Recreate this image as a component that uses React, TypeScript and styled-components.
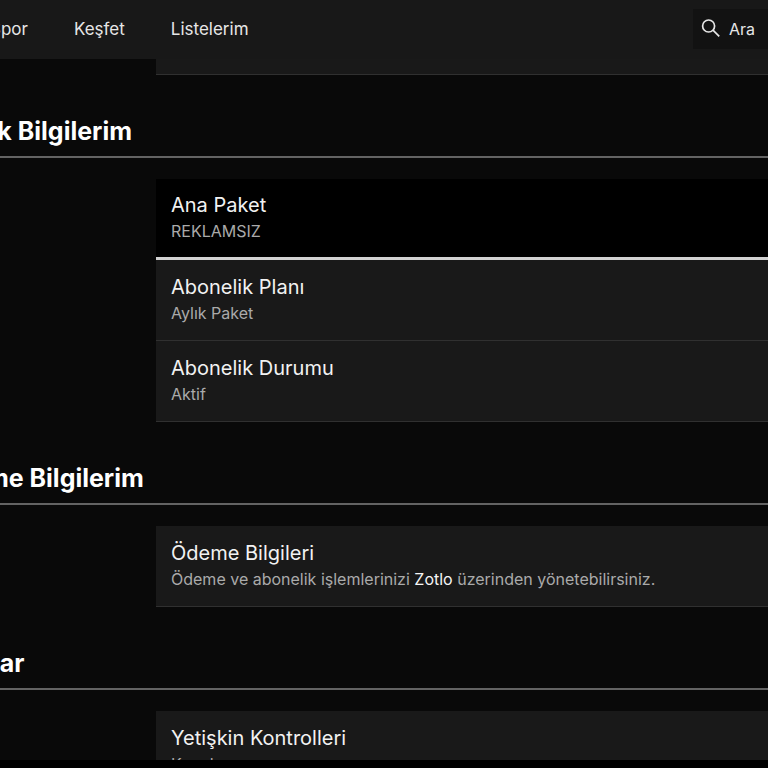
import React from 'react';
import styled, { createGlobalStyle, css } from 'styled-components';

const GlobalStyle = createGlobalStyle`
  * { box-sizing: border-box; }
  body {
    margin: 0;
    background: #000;
    color: #f2f2f2;
    font-family: Inter, "Liberation Sans", sans-serif;
    overflow: hidden;
  }
`;

const Page = styled.div`
  display: flex;
  flex-direction: column;
  height: 100vh;
  padding-bottom: 8px;
  overflow: hidden;
`;

const Header = styled.header`
  display: flex;
  flex: none;
  align-items: center;
  justify-content: space-between;
  height: 59px;
  padding-bottom: 2px;
  background: #181818;
`;

const Nav = styled.nav`
  display: flex;
  gap: 46px;
  margin-left: -10px;
`;

const NavLink = styled.a`
  color: #e6e6e6;
  font-size: 17px;
  line-height: 24px;
  text-decoration: none;
`;

const SearchButton = styled.button`
  display: flex;
  align-items: center;
  gap: 8px;
  height: 40px;
  padding: 0 13px 0 8px;
  border: 0;
  background: #121212;
  color: #e6e6e6;
  font: inherit;
  font-size: 16px;
`;

const Content = styled.main`
  flex: 1;
  min-height: 0;
  margin-left: -64px;
  background: #090909;
  overflow: hidden;
`;

const Panel = styled.div`
  margin-left: 220px;
`;

const PanelEnd = styled.div`
  height: 16px;
  border-bottom: 1px solid #303030;
  background: #191919;
`;

const Section = styled.section`
  padding-top: 40px;
`;

const SectionTitle = styled.h2`
  margin: 0 0 21px;
  padding-bottom: 9px;
  border-bottom: 2px solid #636363;
  color: #fff;
  font-size: 25px;
  font-weight: 700;
  line-height: 32px;
`;

const Row = styled.div<{ $active?: boolean }>`
  padding: 13px 15px 14px;
  border-bottom: 1px solid #303030;
  background: #191919;
  ${(p) =>
    p.$active &&
    css`
      padding-top: 12px;
      padding-bottom: 13px;
      border-bottom: 3px solid #d2d2d2;
      background: #000;
    `}
`;

const RowTitle = styled.h3`
  margin: 0;
  color: #f2f2f2;
  font-size: 20px;
  font-weight: 400;
  line-height: 28px;
`;

const RowText = styled.p`
  margin: 0;
  color: #aaa;
  font-size: 16px;
  line-height: 25px;
`;

const TextLink = styled.a`
  color: #f5f5f5;
  text-decoration: none;
`;

function SearchIcon() {
  return (
    <svg width="20" height="20" viewBox="0 0 20 20" fill="none" stroke="currentColor" strokeWidth="1.7" aria-hidden="true">
      <circle cx="7.6" cy="7" r="6" />
      <path d="M12 11.2L18.2 17.4" />
    </svg>
  );
}

type Item = { title: string; text: React.ReactNode; active?: boolean };

const sections: { title: string; items: Item[] }[] = [
  {
    title: 'Üyelik Bilgilerim',
    items: [
      { title: 'Ana Paket', text: 'REKLAMSIZ', active: true },
      { title: 'Abonelik Planı', text: 'Aylık Paket' },
      { title: 'Abonelik Durumu', text: 'Aktif' },
    ],
  },
  {
    title: 'Ödeme Bilgilerim',
    items: [
      {
        title: 'Ödeme Bilgileri',
        text: (
          <>
            Ödeme ve abonelik işlemlerinizi <TextLink href="#zotlo">Zotlo</TextLink> üzerinden yönetebilirsiniz.
          </>
        ),
      },
    ],
  },
  { title: 'Ayarlar', items: [{ title: 'Yetişkin Kontrolleri', text: 'Kapalı' }] },
];

export default function App() {
  return (
    <Page>
      <GlobalStyle />
      <Header>
        <Nav>
          <NavLink href="#spor">Spor</NavLink>
          <NavLink href="#kesfet">Keşfet</NavLink>
          <NavLink href="#listelerim">Listelerim</NavLink>
        </Nav>
        <SearchButton type="button">
          <SearchIcon />
          Ara
        </SearchButton>
      </Header>
      <Content>
        <Panel>
          <PanelEnd />
        </Panel>
        {sections.map((section) => (
          <Section key={section.title}>
            <SectionTitle>{section.title}</SectionTitle>
            <Panel>
              {section.items.map((item) => (
                <Row key={item.title} $active={item.active}>
                  <RowTitle>{item.title}</RowTitle>
                  <RowText>{item.text}</RowText>
                </Row>
              ))}
            </Panel>
          </Section>
        ))}
      </Content>
    </Page>
  );
}
